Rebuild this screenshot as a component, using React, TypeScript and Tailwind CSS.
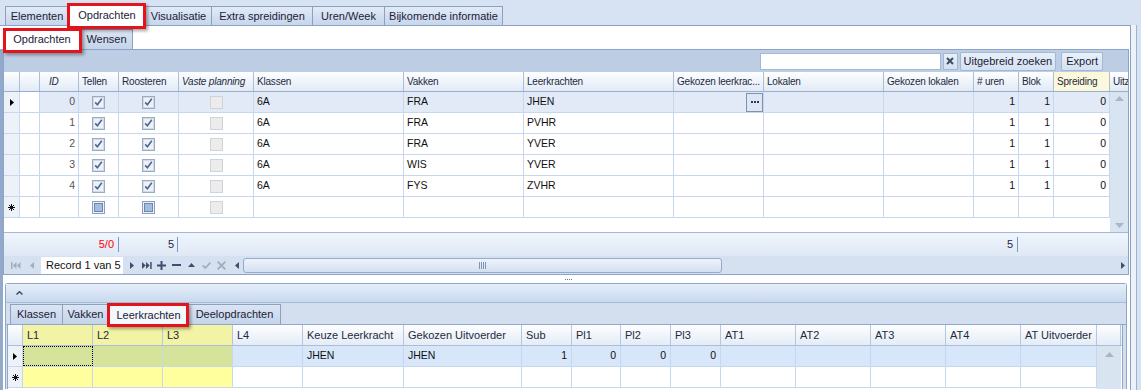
import React from "react";

const font = "font-['Liberation_Sans',Arial,sans-serif]";
const redBox =
  "pointer-events-none absolute border-[3px] border-[#e3141b] shadow-[2px_2px_3px_rgba(0,0,0,0.35)]";

function TopTab({ label, w, active }: { label: string; w: string; active?: boolean }) {
  if (active)
    return (
      <div className={`relative z-10 ${w} h-[22px] -ml-px translate-y-px border border-b-0 border-[#8ca1bf] bg-white flex items-center justify-center text-[11px] text-[#1b2238]`}>
        {label}
        <div className={`${redBox} left-[-2px] top-[-2px] w-[79px] h-[26px]`} />
      </div>
    );
  return (
    <div className={`${w} h-[19px] -ml-px border border-b-0 border-[#8ca1bf] bg-linear-to-b from-[#e2eaf6] to-[#c6d6ec] flex items-center justify-center text-[11px] text-[#1b2238]`}>
      {label}
    </div>
  );
}

function Check({ kind }: { kind: "on" | "off" | "new" }) {
  if (kind === "on")
    return (
      <svg width="13" height="13" viewBox="0 0 13 13">
        <rect x="0.5" y="0.5" width="12" height="12" fill="#e6eaf0" stroke="#9aabc2" />
        <rect x="1.5" y="1.5" width="10" height="10" fill="#eef1f5" stroke="#d3dae4" />
        <path d="M3.2 6.4 L5.4 8.8 L9.8 2.8" fill="none" stroke="#48669a" strokeWidth="1.6" />
      </svg>
    );
  if (kind === "new")
    return (
      <svg width="13" height="13" viewBox="0 0 13 13">
        <rect x="0.5" y="0.5" width="12" height="12" fill="#eef2f7" stroke="#8a9fbf" />
        <rect x="2.5" y="2.5" width="8" height="8" fill="#a6bcdc" stroke="#6c87b1" />
      </svg>
    );
  return (
    <svg width="13" height="13" viewBox="0 0 13 13">
      <rect x="0.5" y="0.5" width="12" height="12" fill="#ececec" stroke="#cfd4da" />
    </svg>
  );
}

function RowArrow() {
  return (
    <svg width="4" height="7" viewBox="0 0 4 7">
      <path d="M0 0 L4 3.5 L0 7 Z" fill="#000" />
    </svg>
  );
}

function Star() {
  return (
    <svg width="7" height="7" viewBox="0 0 7 7" stroke="#111" strokeWidth="1">
      <path d="M3.5 0 V7 M0 3.5 H7 M1 1 L6 6 M6 1 L1 6" />
    </svg>
  );
}

const rows = [
  { id: 0, vak: "FRA", lk: "JHEN" },
  { id: 1, vak: "FRA", lk: "PVHR" },
  { id: 2, vak: "FRA", lk: "YVER" },
  { id: 3, vak: "WIS", lk: "YVER" },
  { id: 4, vak: "FYS", lk: "ZVHR" },
];

const hdr =
  "h-full flex items-center border-r border-[#a9bed8] px-[3px] text-[10px] text-[#1e2a3e] tracking-[-0.2px] overflow-hidden whitespace-nowrap";
const cell = "h-full flex items-center border-r border-[#c6d7ee] text-[10.5px] text-[#111]";

function MainGrid() {
  return (
    <div className="flex flex-col">
      {/* header */}
      <div className="h-[20px] flex border-b border-[#99afcc] bg-linear-to-b from-[#fdfeff] to-[#e2eaf6]">
        <div className={`${hdr} w-[16px]`} />
        <div className={`${hdr} w-[20px]`} />
        <div className={`${hdr} w-[39px] italic pl-[9px]`}>ID</div>
        <div className={`${hdr} w-[40px]`}>Tellen</div>
        <div className={`${hdr} w-[60px]`}>Roosteren</div>
        <div className={`${hdr} w-[75px] italic`}>Vaste planning</div>
        <div className={`${hdr} w-[150px]`}>Klassen</div>
        <div className={`${hdr} w-[120px]`}>Vakken</div>
        <div className={`${hdr} w-[150px]`}>Leerkrachten</div>
        <div className={`${hdr} w-[90px]`}>Gekozen leerkrac...</div>
        <div className={`${hdr} w-[120px]`}>Lokalen</div>
        <div className={`${hdr} w-[90px]`}>Gekozen lokalen</div>
        <div className={`${hdr} w-[45px]`}># uren</div>
        <div className={`${hdr} w-[35px]`}>Blok</div>
        <div className={`${hdr} w-[56px] bg-[#fcf8db]`}>Spreiding</div>
        <div className={`${hdr} w-[18px] border-r-0`}>Uitz</div>
      </div>
      {/* body + scrollbar */}
      <div className="flex">
        <div className="w-[1106px] flex flex-col bg-white">
          {rows.map((r, i) => {
            const sel = i === 0 ? "bg-[#e1eaf6]" : "";
            return (
              <div key={r.id} className="h-[21px] flex border-b border-[#c6d7ee]">
                <div className={`${cell} w-[16px] bg-[#edf2f9] border-[#c1d1e6] justify-center`}>
                  {i === 0 && <RowArrow />}
                </div>
                <div className={`${cell} w-[20px]`} />
                <div className={`${cell} w-[39px] ${sel} justify-end pr-[3px] text-[#555]`}>{r.id}</div>
                <div className={`${cell} w-[40px] ${sel} justify-center`}><Check kind="on" /></div>
                <div className={`${cell} w-[60px] ${sel} justify-center`}><Check kind="on" /></div>
                <div className={`${cell} w-[75px] ${sel} justify-center`}><Check kind="off" /></div>
                <div className={`${cell} w-[150px] ${sel} pl-[3px]`}>6A</div>
                <div className={`${cell} w-[120px] ${sel} pl-[3px]`}>{r.vak}</div>
                <div className={`${cell} w-[150px] ${sel} pl-[3px]`}>{r.lk}</div>
                <div className={`${cell} w-[90px] ${sel} justify-end`}>
                  {i === 0 && (
                    <div className="w-[17px] h-[19px] border border-[#7d92b2] bg-[#dde6f2] flex items-center justify-center gap-[1px]">
                      <span className="w-[2px] h-[2px] bg-[#2a3a55]" />
                      <span className="w-[2px] h-[2px] bg-[#2a3a55]" />
                      <span className="w-[2px] h-[2px] bg-[#2a3a55]" />
                    </div>
                  )}
                </div>
                <div className={`${cell} w-[120px] ${sel}`} />
                <div className={`${cell} w-[90px] ${sel}`} />
                <div className={`${cell} w-[45px] ${sel} justify-end pr-[3px]`}>1</div>
                <div className={`${cell} w-[35px] ${sel} justify-end pr-[3px]`}>1</div>
                <div className={`${cell} w-[56px] ${sel} justify-end pr-[3px]`}>0</div>
              </div>
            );
          })}
          <div className="h-[21px] flex border-b border-[#c6d7ee]">
            <div className={`${cell} w-[16px] bg-[#edf2f9] border-[#c1d1e6] justify-center`}><Star /></div>
            <div className={`${cell} w-[20px]`} />
            <div className={`${cell} w-[39px]`} />
            <div className={`${cell} w-[40px] justify-center`}><Check kind="new" /></div>
            <div className={`${cell} w-[60px] justify-center`}><Check kind="new" /></div>
            <div className={`${cell} w-[75px] justify-center`}><Check kind="off" /></div>
            <div className={`${cell} w-[150px]`} />
            <div className={`${cell} w-[120px]`} />
            <div className={`${cell} w-[150px]`} />
            <div className={`${cell} w-[90px]`} />
            <div className={`${cell} w-[120px]`} />
            <div className={`${cell} w-[90px]`} />
            <div className={`${cell} w-[45px]`} />
            <div className={`${cell} w-[35px]`} />
            <div className={`${cell} w-[56px]`} />
          </div>
          <div className="h-[14px]" />
        </div>
        <div className="w-[18px] bg-[#d9e4f1] flex flex-col items-center justify-between py-[4px]">
          <svg width="9" height="5" viewBox="0 0 9 5"><path d="M0 5 L4.5 0 L9 5 Z" fill="#aab6c6" /></svg>
          <svg width="9" height="5" viewBox="0 0 9 5"><path d="M0 0 L4.5 5 L9 0 Z" fill="#aab6c6" /></svg>
        </div>
      </div>
    </div>
  );
}

function Tri({ dir, c }: { dir: "l" | "r" | "u"; c: string }) {
  const d = dir === "l" ? "M4 0 L0 3.5 L4 7 Z" : dir === "r" ? "M0 0 L4 3.5 L0 7 Z" : "M0 4 L3.5 0 L7 4 Z";
  const w = dir === "u" ? 7 : 4;
  const h = dir === "u" ? 4 : 7;
  return (
    <svg width={w} height={h} viewBox={`0 0 ${w} ${h}`}>
      <path d={d} fill={c} />
    </svg>
  );
}

function Navigator() {
  const dim = "#a5adb9";
  const dark = "#3d4f70";
  return (
    <div className="h-[18px] flex items-center bg-[#d5e1f1] pl-[7px]">
      <svg width="10" height="7" viewBox="0 0 10 7" className="mr-[9px]">
        <path d="M0 0 H1.5 V7 H0 Z M5.5 0 L1.8 3.5 L5.5 7 Z M9.5 0 L5.8 3.5 L9.5 7 Z" fill={dim} />
      </svg>
      <span className="mr-[7px]"><Tri dir="l" c={dim} /></span>
      <div className="w-[82px] h-[17px] bg-white flex items-center pl-[5px] text-[11px] text-[#111] whitespace-nowrap">
        Record 1 van 5
      </div>
      <span className="ml-[7px] mr-[8px]"><Tri dir="r" c={dark} /></span>
      <svg width="10" height="7" viewBox="0 0 10 7" className="mr-[5px]">
        <path d="M0 0 L3.7 3.5 L0 7 Z M4 0 L7.7 3.5 L4 7 Z M8.2 0 H9.7 V7 H8.2 Z" fill={dark} />
      </svg>
      <svg width="9" height="9" viewBox="0 0 9 9" className="mr-[6px]">
        <path d="M3.5 0 H5.5 V3.5 H9 V5.5 H5.5 V9 H3.5 V5.5 H0 V3.5 H3.5 Z" fill={dark} />
      </svg>
      <svg width="9" height="2" viewBox="0 0 9 2" className="mr-[7px]">
        <rect width="9" height="2" fill={dark} />
      </svg>
      <span className="mr-[7px]"><Tri dir="u" c={dark} /></span>
      <svg width="9" height="7" viewBox="0 0 9 7" className="mr-[6px]">
        <path d="M0.6 3.4 L3.3 6 L8.4 0.7" fill="none" stroke={dim} strokeWidth="1.8" />
      </svg>
      <svg width="9" height="9" viewBox="0 0 9 9" className="mr-[9px]">
        <path d="M0.7 0.7 L8.3 8.3 M8.3 0.7 L0.7 8.3" stroke={dim} strokeWidth="1.9" />
      </svg>
      <span className="mr-[4px]"><Tri dir="l" c={dark} /></span>
      <div className="w-[870px] h-[16px] flex items-center">
        <div className="w-[479px] h-[15px] rounded-[3px] border border-[#93abcc] bg-linear-to-b from-[#eef3fa] to-[#d3e0f1] flex items-center justify-center gap-[1px]">
          <span className="w-px h-[7px] bg-[#7f95b8]" />
          <span className="w-px h-[7px] bg-[#7f95b8]" />
          <span className="w-px h-[7px] bg-[#7f95b8]" />
          <span className="w-px h-[7px] bg-[#7f95b8]" />
        </div>
      </div>
      <span className="ml-[8px]"><Tri dir="r" c={dark} /></span>
    </div>
  );
}

const bCols = [
  { l: "L1", w: "w-[70px]", y: true },
  { l: "L2", w: "w-[70px]", y: true },
  { l: "L3", w: "w-[70px]", y: true },
  { l: "L4", w: "w-[70px]" },
  { l: "Keuze Leerkracht", w: "w-[101px]", v: "JHEN" },
  { l: "Gekozen Uitvoerder", w: "w-[118px]", v: "JHEN" },
  { l: "Sub", w: "w-[50px]", v: "1", r: true },
  { l: "Pl1", w: "w-[49px]", v: "0", r: true },
  { l: "Pl2", w: "w-[50px]", v: "0", r: true },
  { l: "Pl3", w: "w-[50px]", v: "0", r: true },
  { l: "AT1", w: "w-[75px]" },
  { l: "AT2", w: "w-[75px]" },
  { l: "AT3", w: "w-[75px]" },
  { l: "AT4", w: "w-[75px]" },
  { l: "AT Uitvoerder", w: "w-[76px]" },
];

function SubTab({ label, w, active }: { label: string; w: string; active?: boolean }) {
  if (active)
    return (
      <div className={`relative z-10 ${w} h-[22px] -ml-px translate-y-px border border-b-0 border-[#8ca1bf] bg-white flex items-center justify-center text-[11px] text-[#1b2238]`}>
        {label}
      </div>
    );
  return (
    <div className={`${w} h-[20px] -ml-px border border-b-0 border-[#8ca1bf] bg-linear-to-b from-[#dbe5f3] to-[#c4d4ea] flex items-center justify-center text-[11px] text-[#1b2238]`}>
      {label}
    </div>
  );
}

function BottomPanel() {
  const bh = "h-full flex items-center border-r border-[#b4c7df] px-[4px] text-[11px] text-[#1e2a3e] whitespace-nowrap";
  const bc = "h-full flex items-center border-r border-[#c6d7ee] text-[10.5px] text-[#111]";
  return (
    <div className="ml-[2px] w-[1122px] h-[106px] border border-b-0 border-[#8ea7ca] rounded-t-[3px] flex flex-col bg-[#d3dfee]">
      <div className="h-[19px] bg-linear-to-b from-[#e6eef9] to-[#c8d9ef] border-b border-[#a7bcd8] flex items-center pl-[10px]">
        <svg width="7" height="4" viewBox="0 0 7 4"><path d="M0.5 3.5 L3.5 0.7 L6.5 3.5" fill="none" stroke="#3b4b66" strokeWidth="1.4" /></svg>
      </div>
      <div className="h-[22px] flex items-end pl-[5px] border-b border-[#8ea7ca]">
        <SubTab label="Klassen" w="w-[53px]" />
        <SubTab label="Vakken" w="w-[47px]" />
        <div className="relative z-10 w-[81px] h-[21px] -ml-px translate-y-px border border-b-0 border-[#8ca1bf] bg-[#f4f7fb] flex items-center justify-center text-[11px] text-[#1b2238]">
          Leerkrachten
          <div className={`${redBox} left-[-2px] top-[-2px] w-[82px] h-[24px]`} />
        </div>
        <SubTab label="Deelopdrachten" w="w-[93px]" />
      </div>
      <div className="ml-[1px] w-[1116px] flex-1 border-l border-r border-[#8ea7ca] bg-white flex flex-col">
        <div className="h-[21px] flex border-b border-[#a9bed8] bg-linear-to-b from-[#fdfeff] to-[#e4ecf6]">
          <div className={`${bh} w-[15px] px-0`} />
          {bCols.map((c) => (
            <div key={c.l} className={`${bh} ${c.w} ${c.y ? "bg-[#f3f3a5] from-transparent" : ""}`}>{c.l}</div>
          ))}
          <div className={`${bh} w-[24px]`} />
        </div>
        <div className="flex flex-1">
          <div className="flex flex-col">
            <div className="h-[21px] flex border-b border-[#c6d7ee]">
              <div className={`${bc} w-[15px] bg-[#edf2f9] justify-center`}><RowArrow /></div>
              {bCols.map((c, i) => (
                <div
                  key={c.l}
                  className={`${bc} ${c.w} ${c.y ? "bg-[#d6e39b]" : "bg-[#d7e6f9]"} ${c.r ? "justify-end pr-[4px]" : "pl-[4px]"} ${i === 0 ? "outline-1 outline-dotted outline-black -outline-offset-1" : ""}`}
                >
                  {c.v}
                </div>
              ))}
            </div>
            <div className="h-[21px] flex border-b border-[#c6d7ee]">
              <div className={`${bc} w-[15px] bg-[#edf2f9] justify-center`}><Star /></div>
              {bCols.map((c) => (
                <div key={c.l} className={`${bc} ${c.w} ${c.y ? "bg-[#ffff9e]" : ""}`} />
              ))}
            </div>
          </div>
          <div className="w-[24px] bg-[#d9e4f1] flex justify-center pt-[6px]">
            <svg width="9" height="5" viewBox="0 0 9 5"><path d="M0 5 L4.5 0 L9 5 Z" fill="#aab6c6" /></svg>
          </div>
        </div>
      </div>
    </div>
  );
}

export default function App() {
  return (
    <div className={`w-[1141px] h-[390px] overflow-hidden bg-[#d7e3f3] ${font} flex flex-col`}>
      {/* top tabs */}
      <div className="h-[25px] flex items-end pl-[6px] shrink-0">
        <TopTab label="Elementen" w="w-[64px]" />
        <TopTab label="Opdrachten" w="w-[78px]" active />
        <TopTab label="Visualisatie" w="w-[67px]" />
        <TopTab label="Extra spreidingen" w="w-[102px]" />
        <TopTab label="Uren/Week" w="w-[73px]" />
        <TopTab label="Bijkomende informatie" w="w-[119px]" />
      </div>

      <div className="flex flex-1">
        <div className="w-[1131px] h-[365px] bg-white border-t border-r border-[#8ca1bf] flex flex-col">
          {/* sub tabs */}
          <div className="h-[23px] flex items-end pl-[3px] shrink-0">
            <div className="relative z-10 w-[78px] h-[22px] translate-y-px border border-b-0 border-[#8ca1bf] bg-white flex items-center justify-center text-[11px] text-[#1b2238]">
              Opdrachten
              <div className={`${redBox} left-[-1px] top-[-1px] w-[79px] h-[25px]`} />
            </div>
            <SubTab label="Wensen" w="w-[53px]" />
          </div>

          <div className="flex flex-1">
            <div className="w-[3px] bg-[#93a9ca]" />
            <div className="w-[1126px] flex flex-col">
              {/* grid panel */}
              <div className="border border-[#8ba4c8] flex flex-col">
                <div className="h-[22px] bg-[#bccde4] flex items-center justify-end pr-[25px]">
                  <div className="w-[181px] h-[17px] bg-white border border-[#a3b8d4]" />
                  <div className="ml-[2px] w-[15px] h-[17px] bg-linear-to-b from-[#e9f0f9] to-[#d3e0f0] border border-[#a3b8d4] flex items-center justify-center">
                    <svg width="8" height="8" viewBox="0 0 8 8"><path d="M1 1 L7 7 M7 1 L1 7" stroke="#3d4c66" strokeWidth="2" /></svg>
                  </div>
                  <div className="ml-[2px] h-[19px] px-[3px] bg-linear-to-b from-[#e9f0f9] to-[#d4e1f1] border border-[#a3b8d4] rounded-[2px] flex items-center text-[11px] text-[#1b2238] whitespace-nowrap">
                    Uitgebreid zoeken
                  </div>
                  <div className="ml-[5px] h-[19px] px-[4px] bg-linear-to-b from-[#e9f0f9] to-[#d4e1f1] border border-[#a3b8d4] rounded-[2px] flex items-center text-[11px] text-[#1b2238]">
                    Export
                  </div>
                </div>
                <MainGrid />
                {/* footer summary */}
                <div className="h-[24px] border-t border-[#a3b9d6] bg-linear-to-b from-[#f0f5fc] to-[#dfe8f5] flex items-center">
                  <div className="w-[115px] flex justify-end">
                    <span className="pr-[4px] border-r border-[#7f97bd] h-[15px] flex items-center text-[11px] text-[#ff0000]">5/0</span>
                  </div>
                  <div className="w-[59px] flex justify-end">
                    <span className="pr-[3px] border-r border-[#7f97bd] h-[15px] flex items-center text-[11px] text-[#1e2a3e]">5</span>
                  </div>
                  <div className="w-[840px] flex justify-end">
                    <span className="pr-[4px] border-r border-[#7f97bd] h-[15px] flex items-center text-[11px] text-[#1e2a3e]">5</span>
                  </div>
                </div>
                <Navigator />
              </div>
              {/* splitter */}
              <div className="h-[8px] bg-white flex justify-center items-center gap-[1px] pl-[4px]">
                <span className="w-px h-px bg-[#5d77a3]" />
                <span className="w-px h-px bg-[#5d77a3]" />
                <span className="w-px h-px bg-[#5d77a3]" />
                <span className="w-px h-px bg-[#5d77a3]" />
              </div>
              <BottomPanel />
            </div>
          </div>
        </div>
        <div className="w-[5px] bg-[#edf2f9]" />
        <div className="w-px bg-[#9fb3cf]" />
      </div>
    </div>
  );
}
